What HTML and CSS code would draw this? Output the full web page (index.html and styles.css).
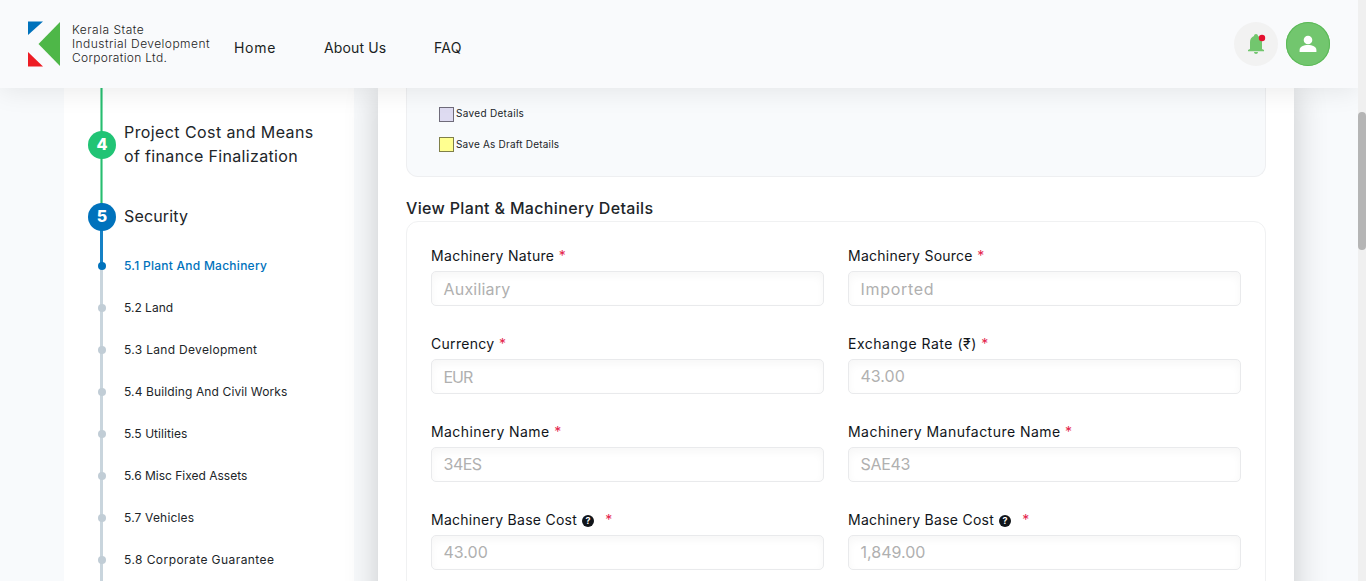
FILE: index.html
```html
<!DOCTYPE html>
<html lang="en">
<head>
<meta charset="utf-8">
<title>Plant and Machinery</title>
<link rel="stylesheet" href="styles.css">
</head>
<body>
<div class="viewport">
  <div class="page">
    <header class="header">
      <svg class="logo" width="32" height="46" viewBox="0 0 32 46"><path fill="#0072bc" d="M0 0.500h15L0 14z"/><path fill="#4eb748" d="M32 1v44L10.500 23z"/><path fill="#ed1c24" d="M0 31l15 14.500H0z"/></svg>
      <div class="brand"><div><span class="b1">Kerala State</span></div><div><span class="b2">Industrial Development</span></div><div><span class="b3">Corporation Ltd.</span></div></div>
      <nav class="nav"><a class="home">Home</a><a class="about">About Us</a><a class="faq">FAQ</a></nav>
      <div class="actions">
        <span class="bell"><svg width="44" height="44" viewBox="0 0 44 44"><path fill="#72c66e" d="M22 12c1.100 0 2 .8 2 2 2.500.9 4 3 4 6v7l2 1v1.200H14V28l2-1v-7c0-3 1.500-5.100 4-6 0-1.200.9-2 2-2zM20 30h4c0 2.500-4 2.500-4 0z"/><circle cx="28" cy="16" r="3.200" fill="#e4102f"/></svg></span>
        <span class="user"><svg width="44" height="44" viewBox="0 0 44 44"><circle cx="22" cy="18" r="4.300" fill="#fff"/><path fill="#fff" d="M13.600 30v-2c0-3.200 4-5 8.400-5s8.400 1.800 8.400 5v2z"/></svg></span>
      </div>
    </header>
    <div class="content">
      <aside class="sidebar">
        <div class="step step4"><span class="rail"><b class="num">4</b></span><span class="title"><span class="t1">Project Cost and Means</span><br><span class="t2">of finance Finalization</span></span></div>
        <div class="step step5"><span class="rail"><b class="num">5</b></span><span class="title"><span class="t3">Security</span></span></div>
        <div class="sub active"><span class="rail"><i></i></span><span class="s1">5.1 Plant And Machinery</span></div>
        <div class="sub"><span class="rail"><i></i></span><span class="s2">5.2 Land</span></div>
        <div class="sub"><span class="rail"><i></i></span><span class="s3">5.3 Land Development</span></div>
        <div class="sub"><span class="rail"><i></i></span><span class="s4">5.4 Building And Civil Works</span></div>
        <div class="sub"><span class="rail"><i></i></span><span class="s5">5.5 Utilities</span></div>
        <div class="sub"><span class="rail"><i></i></span><span class="s6">5.6 Misc Fixed Assets</span></div>
        <div class="sub"><span class="rail"><i></i></span><span class="s7">5.7 Vehicles</span></div>
        <div class="sub"><span class="rail"><i></i></span><span class="s8">5.8 Corporate Guarantee</span></div>
        <div class="sub"><span class="rail"></span></div>
      </aside>
      <main class="main">
        <section class="legend">
          <div class="key"><i class="swatch saved"></i><span class="k1">Saved Details</span></div>
          <div class="key"><i class="swatch draft"></i><span class="k2">Save As Draft Details</span></div>
        </section>
        <h2 class="heading"><span>View Plant &amp; Machinery Details</span></h2>
        <section class="form">
          <div class="field"><label><span class="l1">Machinery Nature</span><em>*</em></label><div class="input"><span class="v1">Auxiliary</span></div></div>
          <div class="field"><label><span class="l2">Machinery Source</span><em>*</em></label><div class="input"><span class="v2">Imported</span></div></div>
          <div class="field"><label><span class="l3">Currency</span><em>*</em></label><div class="input"><span class="v3">EUR</span></div></div>
          <div class="field"><label><span class="l4">Exchange Rate (₹)</span><em>*</em></label><div class="input raised"><span class="v4">43.00</span></div></div>
          <div class="field"><label><span class="l5">Machinery Name</span><em>*</em></label><div class="input raised"><span class="v5">34ES</span></div></div>
          <div class="field"><label><span class="l6">Machinery Manufacture Name</span><em>*</em></label><div class="input raised"><span class="v6">SAE43</span></div></div>
          <div class="field"><label><span class="l7">Machinery Base Cost</span><b class="help">?</b><em class="far">*</em></label><div class="input raised"><span class="v7">43.00</span></div></div>
          <div class="field"><label><span class="l7">Machinery Base Cost</span><b class="help">?</b><em class="far">*</em></label><div class="input raised"><span class="v8">1,849.00</span></div></div>
        </section>
      </main>
    </div>
  </div>
  <div class="scrollbar"><div class="thumb"></div></div>
</div>
</body>
</html>
```
FILE: styles.css
```css
* { box-sizing: border-box; }
body { margin: 0; font-family: Inter, "Noto Sans", sans-serif; color: #212529; }
.viewport { display: flex; width: 1366px; height: 581px; overflow: hidden; }
.page { width: 1358px; height: 581px; background: #f8fafc; overflow: hidden; }
.scrollbar { width: 8px; background: #f0f0f0; padding-top: 112px; }
.thumb { height: 138px; border-radius: 4px; background: #b5b5b5; }

.header { position: relative; z-index: 2; display: flex; align-items: flex-start; height: 88px; padding-left: 28px; background: #f9fafc; box-shadow: 0 4px 24px rgba(0, 0, 0, .08); }
.logo { margin-top: 21px; }
.brand { width: 162px; margin: 22px 0 0 12px; padding-top: 1px; font-size: 12px; line-height: 14px; font-weight: 300; color: #222; white-space: nowrap; }
.b1 { letter-spacing: .5px; }
.b2 { letter-spacing: .44px; }
.b3 { letter-spacing: .32px; }
.nav { display: flex; padding-top: 38px; font-size: 14px; line-height: 20px; color: #1b1f23; white-space: nowrap; }
.home { width: 90px; letter-spacing: .7px; }
.about { width: 110px; letter-spacing: .12px; }
.faq { letter-spacing: .3px; }
.actions { display: flex; gap: 8px; margin: 22px 28px 0 auto; }
.bell, .user { width: 44px; height: 44px; border-radius: 50%; background: #f2f2f2; }
.user { background: #72c66e; box-shadow: inset 0 0 0 1px #5bb957; }
.bell svg, .user svg { display: block; }

.content { display: flex; gap: 24px; height: 600px; padding-left: 64px; }
.sidebar { width: 290px; padding-left: 24px; background: #fff; white-space: nowrap; }
.step, .sub { display: flex; gap: 8px; }
.rail { display: flex; flex: none; justify-content: center; align-items: center; width: 28px; background: linear-gradient(#c9d5dd, #c9d5dd) 12px 0 / 3px 100% no-repeat; }
.step4 { height: 115px; }
.step4 .rail { padding-bottom: 1px; background-image: linear-gradient(90deg, #85dcaf 1px, #28bd70 1px 2px, #85dcaf 2px); }
.step5 { height: 42px; }
.step5 .rail { align-items: flex-start; background-image: linear-gradient(#1681c5, #1681c5); }
.num { width: 28px; height: 28px; border-radius: 50%; background: #21c475; color: #fff; font-size: 16px; line-height: 27px; font-weight: 800; text-align: center; }
.step5 .num { background: #0072bc; }
.title { font-size: 16px; line-height: 24px; }
.step4 .title { padding-top: 32px; }
.step5 .title { padding-top: 1px; }
.t1 { letter-spacing: .41px; }
.t2 { letter-spacing: .34px; }
.t3 { letter-spacing: .15px; }
.sub { height: 42px; align-items: center; font-size: 12px; line-height: 18px; }
.sub .rail { height: 42px; }
.sub i { width: 8px; height: 8px; margin-right: 1px; border-radius: 50%; background: #c1cdd6; }
.active { color: #0072bc; font-weight: 500; }
.active .rail { background-image: linear-gradient(#1681c5 50%, #c9d5dd 50%); }
.sub.active i { background: #0072bc; }
.s1 { letter-spacing: .26px; }
.s3 { letter-spacing: .31px; }
.s4 { letter-spacing: .12px; }
.s5 { letter-spacing: .05px; }
.s7 { letter-spacing: .17px; }
.s8 { letter-spacing: .43px; }

.main { width: 916px; padding: 0 28px; background: #fff; box-shadow: 0 0 32px rgba(0, 0, 0, .2); white-space: nowrap; }
.legend { height: 89px; padding: 19px 32px 0; border: 1px solid #eeeff1; border-top: 0; border-radius: 0 0 12px 12px; background: #f8fafc; font-size: 10px; line-height: 14px; }
.key { display: flex; gap: 2px; height: 30px; }
.k1 { line-height: 12px; letter-spacing: .31px; }
.k2 { letter-spacing: .2px; }
.swatch { width: 15px; height: 15px; border: 1px solid #6f6b7a; background: #dedbf1; }
.draft { border-color: #7f7f49; background: #ffff90; }
.heading { height: 44px; margin: 0; padding-top: 19px; font-size: 16px; line-height: 24px; font-weight: 500; letter-spacing: .34px; }
.form { display: grid; grid-template-columns: 393px 393px; gap: 0 24px; height: 400px; align-content: start; padding: 24px; border: 1px solid #f0f1f2; border-radius: 12px; }
.field { height: 88px; }
label { display: flex; align-items: center; height: 19px; margin-bottom: 6px; font-size: 14px; line-height: 18px; color: #11151a; }
.l1 { letter-spacing: .31px; }
.l2 { letter-spacing: .25px; }
.l3 { letter-spacing: .3px; }
.l4 { letter-spacing: .52px; }
.l5 { letter-spacing: .42px; }
.l6 { letter-spacing: .46px; }
.l7 { letter-spacing: .27px; }
em { margin-left: 4.500px; color: #e4254b; font-style: normal; }
.far { margin-left: 11px; }
.help { width: 12px; height: 12px; margin: 3px 0 0 5px; border-radius: 50%; background: #11151a; color: #fff; font-size: 9px; line-height: 12px; text-align: center; }
.input { height: 35px; padding: 0 11.500px; border: 1px solid #e9eaec; border-radius: 5px; background: #fff; box-shadow: inset 0 4px 8px rgba(0, 0, 0, .035); font-size: 16px; line-height: 34px; color: #b0b0b0; }
.raised { line-height: 32px; }
.v1 { letter-spacing: .2px; }
.v2 { letter-spacing: .7px; }
.v3 { letter-spacing: -1px; }
.v5 { letter-spacing: -.5px; }
.v6 { letter-spacing: -.3px; }
```
